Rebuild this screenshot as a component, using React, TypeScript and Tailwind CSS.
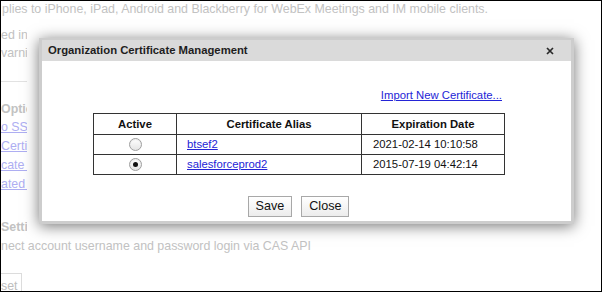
import React from "react";

function Radio({ checked }: { checked?: boolean }) {
  return (
    <span className="inline-flex w-[13px] h-[13px] rounded-full border border-[#a0a0a0] bg-gradient-to-b from-white to-[#e4e4e4] items-center justify-center align-middle shadow-[inset_0_1px_1px_rgba(0,0,0,0.08)]">
      {checked ? <span className="w-[5px] h-[5px] rounded-full bg-[#111]" /> : null}
    </span>
  );
}

export default function App() {
  const clip = "w-[26px] overflow-hidden whitespace-nowrap";
  return (
    <div
      className="relative w-[602px] h-[292px] overflow-hidden border border-black bg-white text-[12.4px] text-[#c2c2c2]"
      style={{ fontFamily: '"Liberation Sans", Arial, sans-serif' }}
    >
      {/* faded background page */}
      <div className="flex flex-col">
        <div className="leading-[17px] h-[17px] whitespace-nowrap pl-[1px]">
          plies to iPhone, iPad, Android and Blackberry for WebEx Meetings and IM mobile clients.
        </div>
        <div className={`${clip} mt-[8px] leading-[18px]`}>ed in the</div>
        <div className={`${clip} leading-[18px]`}>varning</div>
        <div className="w-[26px] h-px bg-[#e2e2e2] mt-[19px]" />
        <div className={`${clip} mt-[18px] leading-[18px] font-bold`}>Options</div>
        <div className={`${clip} leading-[19px] text-[#aeaef2] underline`}>o SSO</div>
        <div className={`${clip} leading-[19px] text-[#aeaef2] underline`}>Certificate</div>
        <div className={`${clip} leading-[19px] text-[#aeaef2] underline`}>cate Man</div>
        <div className={`${clip} leading-[19px] text-[#aeaef2] underline`}>ated List</div>
        <div className={`${clip} mt-[24px] leading-[18px] font-bold`}>Settings</div>
        <div className="mt-[1px] leading-[18px] whitespace-nowrap">
          nect account username and password login via CAS API
        </div>
        <div className="mt-[18px] w-[21px] h-[24px] border border-[#dcdcdc] border-l-0 leading-[22px] pt-[1px] text-[#bdbdbd]">
          set
        </div>
      </div>

      {/* dialog */}
      <div className="absolute left-[38px] top-[37px] w-[535px] h-[186px] bg-[#cdcdcd] p-[3px] pt-[2px] shadow-[0_2px_14px_rgba(0,0,0,0.55)] flex flex-col">
        <div className="h-[21px] bg-[#dadada] flex items-center justify-between pl-[6px] pr-[17px]">
          <span className="text-[11.3px] font-bold text-[#1e1e1e] leading-none">
            Organization Certificate Management
          </span>
          <svg width="8" height="8" viewBox="0 0 8 8">
            <path d="M1 1L7 7M7 1L1 7" stroke="#2a2a2a" strokeWidth="1.7" />
          </svg>
        </div>
        <div className="flex-1 bg-white text-[11.3px] text-[#111]">
          <div className="ml-[51px] w-[411px] flex flex-col pt-[27px]">
            <div className="flex justify-end pr-[2px] leading-[14px]">
              <span className="text-[#2424d6] underline">Import New Certificate...</span>
            </div>
            <table className="mt-[11px] w-[411px] border-collapse border border-[#333] table-fixed">
              <colgroup>
                <col className="w-[83px]" />
                <col className="w-[185px]" />
                <col className="w-[143px]" />
              </colgroup>
              <thead>
                <tr className="h-[21px]">
                  <th className="border border-[#333] font-bold text-center p-0">Active</th>
                  <th className="border border-[#333] font-bold text-center p-0">Certificate Alias</th>
                  <th className="border border-[#333] font-bold text-center p-0">Expiration Date</th>
                </tr>
              </thead>
              <tbody>
                <tr className="h-[20px]">
                  <td className="border border-[#333] text-center p-0 leading-none">
                    <Radio />
                  </td>
                  <td className="border border-[#333] pl-[10px] p-0">
                    <span className="text-[#2424d6] underline">btsef2</span>
                  </td>
                  <td className="border border-[#333] pl-[11px] p-0">2021-02-14 10:10:58</td>
                </tr>
                <tr className="h-[20px]">
                  <td className="border border-[#333] text-center p-0 leading-none">
                    <Radio checked />
                  </td>
                  <td className="border border-[#333] pl-[10px] p-0">
                    <span className="text-[#2424d6] underline">salesforceprod2</span>
                  </td>
                  <td className="border border-[#333] pl-[11px] p-0">2015-07-19 04:42:14</td>
                </tr>
              </tbody>
            </table>
            <div className="mt-[21px] flex justify-center gap-[9px] text-[12.6px]">
              <button className="h-[21px] px-[7px] border border-[#a8a8a8] bg-gradient-to-b from-white to-[#ececec] text-[#111] leading-none">
                Save
              </button>
              <button className="h-[21px] px-[7px] border border-[#a8a8a8] bg-gradient-to-b from-white to-[#ececec] text-[#111] leading-none">
                Close
              </button>
            </div>
          </div>
        </div>
      </div>
    </div>
  );
}
